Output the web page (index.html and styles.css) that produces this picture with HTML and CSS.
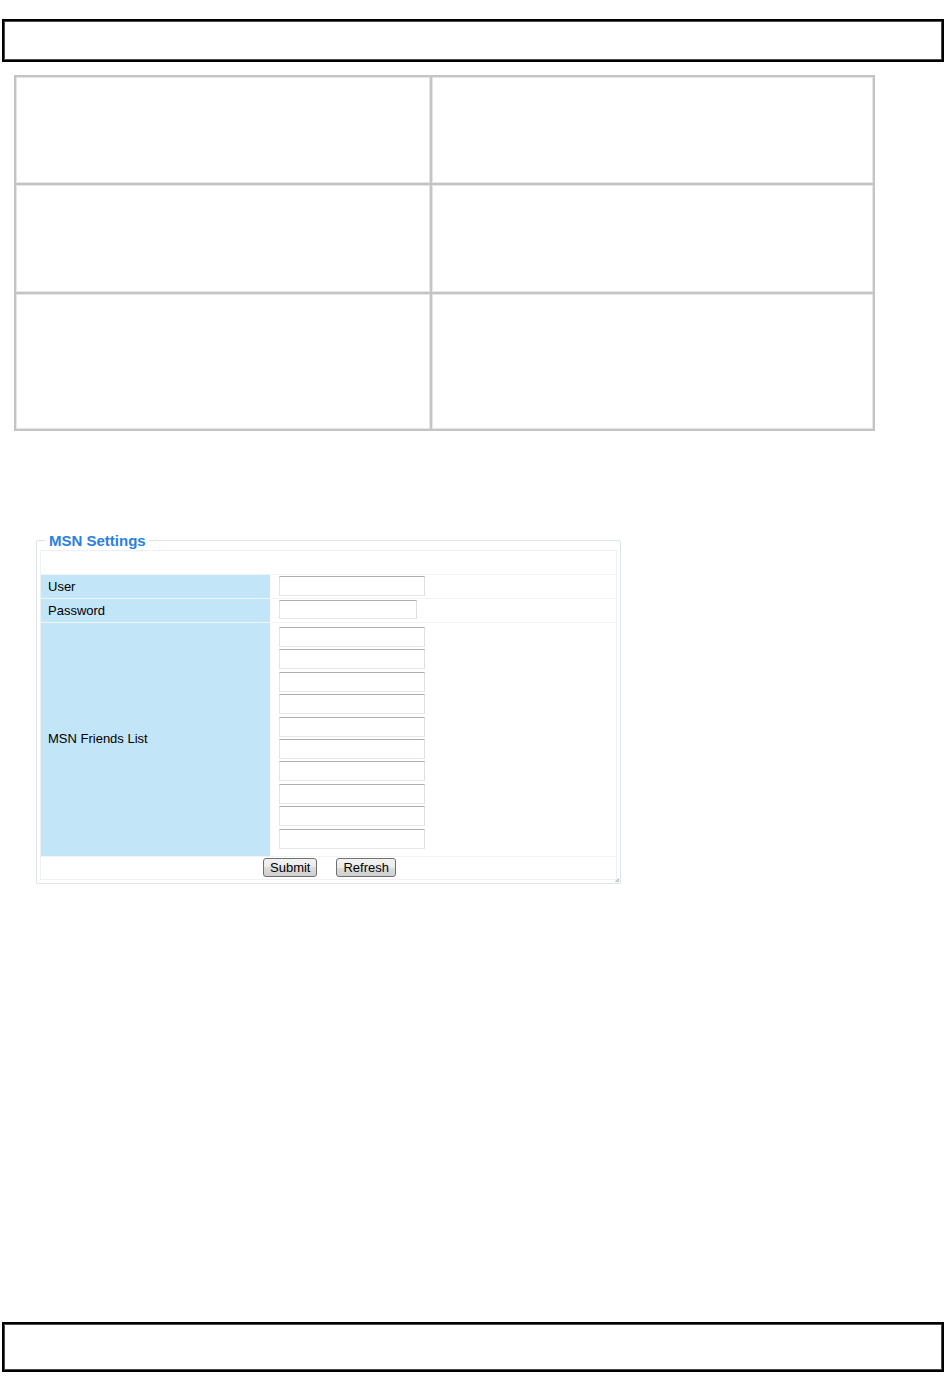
FILE: index.html
```html
<!DOCTYPE html>
<html>
<head>
<meta charset="utf-8">
<title>MSN Settings</title>
<link rel="stylesheet" href="styles.css">
</head>
<body>
<div class="page">
  <div class="frame frame-top"></div>

  <div class="grid">
    <div class="cell"></div><div class="cell"></div>
    <div class="cell"></div><div class="cell"></div>
    <div class="cell"></div><div class="cell"></div>
  </div>

  <fieldset class="settings">
    <legend class="legend">MSN Settings</legend>
    <div class="form">
      <div class="row row-empty"></div>
      <div class="row">
        <div class="label">User</div>
        <div class="value value-single"><input class="field" type="text"></div>
      </div>
      <div class="row">
        <div class="label">Password</div>
        <div class="value value-single"><input class="field field-pass" type="password"></div>
      </div>
      <div class="row row-friends">
        <div class="label label-friends">MSN Friends List</div>
        <div class="value value-list">
          <input class="field" type="text">
          <input class="field" type="text">
          <input class="field" type="text">
          <input class="field" type="text">
          <input class="field" type="text">
          <input class="field" type="text">
          <input class="field" type="text">
          <input class="field" type="text">
          <input class="field" type="text">
          <input class="field" type="text">
        </div>
      </div>
      <div class="row row-buttons">
        <button class="btn" type="button">Submit</button>
        <button class="btn" type="button">Refresh</button>
      </div>
    </div>
    <span class="grip"></span>
  </fieldset>

  <div class="frame frame-bottom"></div>
</div>
</body>
</html>
```

FILE: styles.css
```css
html, body {
  margin: 0;
  padding: 0;
  background: #ffffff;
}

.page {
  min-height: 1387px;
  display: flex;
  flex-direction: column;
  align-items: flex-start;
  font-family: "Liberation Sans", Arial, sans-serif;
  font-size: 13px;
  color: #000;
}

.frame {
  box-sizing: border-box;
  width: 942px;
  margin-left: 2px;
  border: 2px solid #000;
  box-shadow: inset 0 0 0 1px #4a4a4a;
  background: #fff;
}

.frame-top {
  margin-top: 19px;
  height: 43px;
}

.frame-bottom {
  margin-top: auto;
  margin-bottom: 15px;
  height: 50px;
}

.grid {
  margin: 13px 0 0 14px;
  width: 861px;
  box-sizing: border-box;
  border: 2px solid #c4c4c4;
  display: grid;
  grid-template-columns: 414px 441px;
  grid-template-rows: 106px 107px 135px;
  gap: 2px;
  background: #c4c4c4;
}

.cell {
  background: #fff;
  box-shadow: inset 0 0 0 1px #e6e6e6;
}

.settings {
  position: relative;
  margin: 101px 0 0 36px;
  padding: 1px 3px 3px 3px;
  width: 577px;
  border: 1px solid #dce3e9;
  border-radius: 2px;
}

.legend {
  margin-left: 6px;
  padding: 0 3px;
  font-size: 15px;
  line-height: 17px;
  font-weight: bold;
  color: #2a7fe0;
}

.form {
  border: 1px solid #eef1f3;
  border-bottom: none;
}

.row {
  display: flex;
  border-bottom: 1px solid #f1f3f5;
}

.row-empty {
  height: 23px;
}

.label {
  box-sizing: border-box;
  width: 229px;
  height: 23px;
  padding-left: 7px;
  line-height: 23px;
  background: #c3e5f8;
}

.label-friends {
  height: auto;
  display: flex;
  align-items: center;
  padding-bottom: 2px;
}

.value {
  padding-left: 9px;
}

.value-single {
  padding-top: 1px;
}

.value-list {
  display: flex;
  flex-direction: column;
  gap: 2.4px;
  padding-top: 4px;
  padding-bottom: 7px;
}

.field {
  box-sizing: border-box;
  display: block;
  margin: 0;
  width: 146px;
  height: 20px;
  border: 1px solid;
  border-color: #abadb3 #dbdfe6 #e3e9ef #e2e3ea;
  background: #fff;
  padding: 0 2px;
  font-family: "Liberation Sans", Arial, sans-serif;
  font-size: 13px;
}

.field-pass {
  width: 138px;
  height: 19px;
}

.row-buttons {
  justify-content: center;
  gap: 19px;
  padding: 1px 0 2px 2px;
  border-bottom: 1px solid #eef1f3;
}

.btn {
  box-sizing: border-box;
  height: 19px;
  margin: 0;
  padding: 0 6px;
  border: 1px solid #707070;
  border-radius: 3px;
  background: linear-gradient(#f2f2f2 0%, #ebebeb 50%, #dddddd 50%, #cfcfcf 100%);
  font-family: "Liberation Sans", Arial, sans-serif;
  font-size: 13px;
  line-height: 17px;
  color: #000;
}

.grip {
  position: absolute;
  right: 1px;
  bottom: 1px;
  width: 4px;
  height: 4px;
  background: linear-gradient(135deg, transparent 50%, #c8ccd0 50%);
}
```
